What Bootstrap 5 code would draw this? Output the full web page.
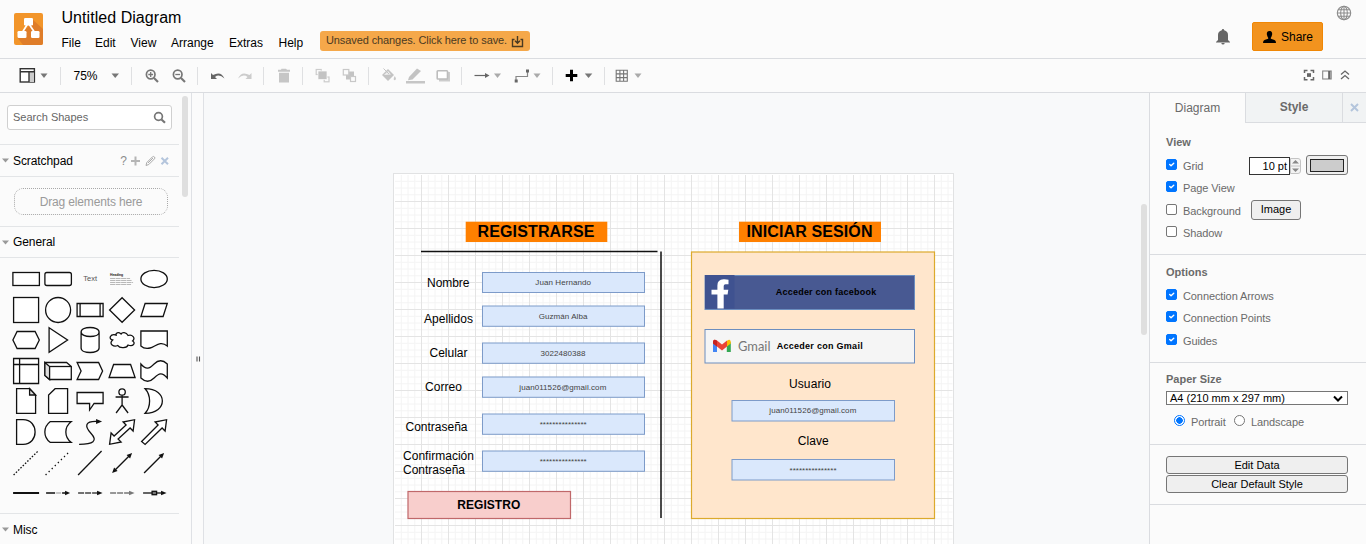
<!DOCTYPE html>
<html lang="es">
<head>
<meta charset="utf-8">
<meta name="viewport" content="width=device-width, initial-scale=1">
<title>Untitled Diagram</title>
<link href="https://cdn.jsdelivr.net/npm/bootstrap@5.3.0/dist/css/bootstrap.min.css" rel="stylesheet">
<script src="https://cdn.jsdelivr.net/npm/bootstrap@5.3.0/dist/js/bootstrap.bundle.min.js"></script>
<style>
body{font-family:"Liberation Sans",Arial,sans-serif;font-size:12px;line-height:1.2;color:#000;background:#fbfbfb;height:544px;overflow:hidden}
svg{display:block;flex:none}
.topbar{height:59px;border-bottom:1px solid #dadce0}
.logo-box{margin:13px 0 0 14px}
.doc-title{font-size:16px;line-height:18px;margin-top:9px;letter-spacing:.05px}
.menu-row{height:22px;margin-top:5px}
.menu-row a{color:#000;text-decoration:none}
.menu-row a.mi{display:block;line-height:22px}
.save-pill{width:210px;height:20px;background:#f5a84a;border-radius:3px;font-size:11px;padding-left:6px;letter-spacing:-.1px;white-space:nowrap}
.menu-row a.save-pill{color:#4b3a22}
.share-btn{width:71px;height:29px;background:#f2931e;border:1px solid #f08705;border-radius:2px;margin:22px 6px 0 0;font-size:12px;padding:0 0 0 9px;color:#000}
.share-btn span{padding-top:1px}
.toolstrip{height:34px;border-bottom:1px solid #dadce0}
.tsep{width:1px;height:18px;background:#dfe0e2;flex:none}
.workspace{height:451px}
.side-l{width:192px;border-right:1px solid #dfe1e5;position:relative}
.side-in{width:179px}
.scroll-thumb{position:absolute;background:#dfdfdf;border-radius:3px}
.search-box{margin:12px 0 0 7px;width:165px;height:25px;border:1px solid #d0d0d0;border-radius:3px;background:#fff;color:#666;padding:0 5px;font-size:11px}
.search-box span{padding-top:1px}
.sec-head{height:33px;border-top:1px solid #e3e5e7;padding-left:2px}
.sec-head span{margin-left:3px;padding-top:1px;letter-spacing:-.08px}
.drop-box{margin:11px 0 11px 14px;width:154px;height:27px;border:1px dotted #a8a8a8;border-radius:9px;color:#9a9a9a;letter-spacing:-.15px;padding-top:1px}
.shape-grid{display:grid;grid-template-columns:repeat(5,32.2px);grid-auto-rows:30.6px;padding:6px 0 0 9.6px;height:256px;border-top:1px solid #e3e5e7}
.shape-grid svg{width:32.2px;height:30.6px;fill:#fff;stroke:#111;stroke-width:1.3}
.splitter{width:12px;border-right:1px solid #dfe1e5}
.side-r{width:217px;border-left:1px solid #dadce0;color:#6a6a6a;font-size:11px}
.tab-r{height:30px;font-size:12px}
.tab-off{background:#f1f3f4;border-left:1px solid #dadce0;border-bottom:1px solid #dadce0}
.sect{border-bottom:1px solid #dadce0;padding-left:16px}
.sect h6{font-size:11px;font-weight:700;line-height:18px;margin:0 0 3.75px;color:#6a6a6a}
.opt{height:22.4px;letter-spacing:-.1px}
.opt>span{padding-top:1.600px}
.opt .form-check-input{width:11px;height:11px;margin:-3px 6px 0 0;border:1px solid #767676;border-radius:2px;flex:none}
.opt .form-check-input[type=radio]{border-radius:50%}
.opt .form-check-input:checked{background-color:#0075ff;border-color:#0075ff}
.opt .form-check-input[type=radio]:checked{background-color:#fff;border-color:#0075ff;background-image:radial-gradient(circle,#0075ff 0 3px,transparent 3.5px)}
.num{width:41px;height:18px;border:1px solid #333;background:#fff;color:#000;text-align:right;padding-right:2px;line-height:17px;letter-spacing:0}
.gbtn{background:#efefef;border:1px solid #767676;border-radius:3px;color:#000;font-size:11px;line-height:1;display:flex;align-items:center;justify-content:center;padding:0}
.size-sel{width:182px;height:14px;border:1px solid #767676;background:#fff;color:#000;padding:0 4px 0 3px}
.size-sel span{padding-top:1px}
</style>
</head>
<body>
<header class="topbar d-flex">
  <div class="logo-box">
    <svg width="29" height="32" viewBox="0 0 29 32"><rect width="29" height="32" rx="2" fill="#f2952a"/><path d="M18 6L29 16V30Q29 32 27 32H9L3 24L14 14Z" fill="#df7d29"/><path d="M13.500 11L8 20M15 11L21 20" stroke="#fff" stroke-width="1.700"/><g fill="#fff"><rect x="10" y="5" width="9" height="7.500" rx="1.300"/><rect x="3.500" y="18" width="9" height="7" rx="1.300"/><rect x="17" y="18" width="8.500" height="7" rx="1.300"/></g></svg>
  </div>
  <div class="d-flex flex-column" style="margin-left:18.5px">
    <div class="doc-title">Untitled Diagram</div>
    <nav class="menu-row d-flex">
      <a class="mi" href="#" style="width:33.5px">File</a><a class="mi" href="#" style="width:35.5px">Edit</a><a class="mi" href="#" style="width:40.5px">View</a><a class="mi" href="#" style="width:58px">Arrange</a><a class="mi" href="#" style="width:49.5px">Extras</a><a class="mi" href="#" style="width:41.5px">Help</a>
      <a href="#" class="save-pill d-flex align-items-center" style="margin-top:-1px">Unsaved changes. Click here to save.<svg class="ms-1" width="13" height="13" viewBox="0 0 13 13" fill="none" stroke="#4b3a22" stroke-width="1.400"><path d="M3.500 4.500H1.500V11.500H11.500V4.500H9.500M6.500 1V8M4 5.800L6.500 8.300L9 5.800"/></svg></a>
    </nav>
  </div>
  <div class="d-flex ms-auto">
    <svg style="margin:28px 21px 0 0" width="16" height="17" viewBox="0 0 16 17"><path d="M8 1Q9.200 1 9.200 2.300Q13 3.300 13 7V12L15 14V14.500H1V14L3 12V7Q3 3.300 6.800 2.300Q6.800 1 8 1ZM6.300 15H9.700Q9.500 16.500 8 16.500Q6.500 16.500 6.300 15Z" fill="#666"/></svg>
    <button class="share-btn d-flex align-items-center"><svg width="15" height="14" viewBox="0 0 15 14"><path d="M7.500 1C10 1 10.500 3 10 5Q9.500 7 8.800 7.700V8.800L12.500 10Q14 10.500 14 13H1Q1 10.500 2.500 10L6.200 8.800V7.700Q5.500 7 5 5C4.500 3 5 1 7.500 1Z"/></svg><span class="ms-1">Share</span></button>
    <svg style="margin:5px 14px 0 7px" width="16" height="16" viewBox="0 0 16 16" fill="none" stroke="#8c8c8c" stroke-width="1.100"><circle cx="8" cy="8" r="6.700"/><ellipse cx="8" cy="8" rx="3.300" ry="6.700"/><path d="M8 1V15M1.300 8H14.700M2.300 4.700H13.700M2.300 11.300H13.700"/></svg>
  </div>
</header>

<div class="toolstrip d-flex align-items-center">
  <svg width="60" height="33" viewBox="0 59 60 33"><g fill="none" stroke="#333" stroke-width="1.400"><rect x="20.200" y="68.700" width="14.200" height="13.300" fill="#fff"/><rect x="29" y="72" width="5" height="10" fill="#ccc" stroke="none"/><path d="M20 71.700H34.500M29 72V82"/></g><path d="M40.500 73.500H47.500L44 78Z" fill="#777"/></svg>
  <div class="tsep"></div>
  <span style="width:50px;padding:1px 0 0 12.5px">75%</span>
  <svg width="20" height="33" viewBox="111 59 20 33"><path d="M111.500 73.500H119L115.200 78Z" fill="#777"/></svg>
  <div class="tsep"></div>
  <svg width="33" height="33" viewBox="132 59 33 33" fill="none" stroke="#777" stroke-width="1.700"><circle cx="150.700" cy="74.500" r="4.300"/><path d="M154 78L158 82" stroke-width="2.200"/><path d="M148.300 74.500H153.100M150.700 72.100V76.900" stroke-width="1.300"/></svg>
  <svg width="32" height="33" viewBox="165 59 32 33" fill="none" stroke="#777" stroke-width="1.700"><circle cx="177.700" cy="74.500" r="4.300"/><path d="M181 78L185 82" stroke-width="2.200"/><path d="M175.300 74.500H180.100" stroke-width="1.300"/></svg>
  <div class="tsep"></div>
  <svg width="33" height="33" viewBox="198 59 33 33"><path d="M211 73V79H217L215 77Q219 73.500 224.500 78.500Q221 70.500 213 75Z" fill="#666"/></svg>
  <svg width="32" height="33" viewBox="231 59 32 33"><path d="M251.500 73V79H245.500L247.500 77Q243.500 73.500 238 78.500Q241.500 70.500 249.500 75Z" fill="#ccc"/></svg>
  <div class="tsep"></div>
  <svg width="38" height="33" viewBox="264 59 38 33"><path d="M281.500 68.700H286L287 69.700H290V71.700H278V69.700H281ZM279 72.700H289V82.500H279Z" fill="#c6c6c6"/></svg>
  <div class="tsep"></div>
  <svg width="32" height="33" viewBox="303 59 32 33"><g fill="none" stroke="#ccc" stroke-width="1.200"><rect x="316.200" y="69.500" width="5" height="5"/><rect x="324.200" y="77" width="4.800" height="4.800"/></g><rect x="318" y="71" width="9" height="8.500" fill="#c3c3c3" stroke="#fbfbfb" stroke-width=".7"/></svg>
  <svg width="33" height="33" viewBox="335 59 33 33"><rect x="346" y="71.500" width="8" height="8" fill="#c3c3c3"/><g fill="#fbfbfb" stroke="#c8c8c8" stroke-width="1.200"><rect x="343.300" y="69.500" width="5.500" height="5.500"/><rect x="350.500" y="76.500" width="5" height="5"/></g></svg>
  <div class="tsep"></div>
  <svg width="33" height="33" viewBox="369 59 33 33"><path d="M382 75L388 69L394 75L388 81Z" fill="#c3c3c3"/><path d="M384 75L388 71L391 74.500Z" fill="#eee"/><path d="M383.500 68.500L389 74" stroke="#c3c3c3" fill="none"/><path d="M394.700 76Q397 79 395 80.300Q392.500 80.300 394.700 76Z" fill="#c8c8c8"/></svg>
  <svg width="28" height="33" viewBox="402 59 28 33"><path d="M409 77L417 68.500L421 71L412.500 79.500L408 80.300Z" fill="#c3c3c3"/><rect x="406" y="81" width="19" height="2.500" fill="#c6c6c6"/></svg>
  <svg width="31" height="33" viewBox="430 59 31 33"><path d="M439 72H450V81.500H439Z" fill="#ccc"/><rect x="437.200" y="70.700" width="10.300" height="8.300" rx=".7" fill="#fff" stroke="#bdbdbd" stroke-width="1.600"/></svg>
  <div class="tsep"></div>
  <svg width="46" height="33" viewBox="462 59 46 33"><path d="M474.500 75.500H486" stroke="#666" stroke-width="1.200"/><path d="M485 73L489.500 75.500L485 78Z" fill="#666"/><path d="M494 73.500H501L497.500 78Z" fill="#aaa"/></svg>
  <svg width="44" height="33" viewBox="508 59 44 33"><path d="M516 81V76.500H527.500V70.500" fill="none" stroke="#888" stroke-width="1.200"/><path d="M514.700 79.500H517.700V82.500H514.700ZM526 69.500H529V72.500H526Z" fill="#666"/><path d="M533.500 73.500H540.500L537 78Z" fill="#aaa"/></svg>
  <div class="tsep"></div>
  <svg width="51" height="33" viewBox="553 59 51 33"><path d="M565.700 75.500H577.300M571.500 69.800V81.200" stroke="#000" stroke-width="3"/><path d="M584.800 73.500H592.300L588.500 78Z" fill="#777"/></svg>
  <div class="tsep"></div>
  <svg width="60" height="33" viewBox="605 59 60 33"><path d="M616.200 70.200H627.300V81.300H616.200ZM619.900 70V81.500M623.600 70V81.500M616 73.900H627.500M616 77.600H627.500" fill="none" stroke="#777" stroke-width="1.100"/><path d="M634.500 73.500H641.500L638 78Z" fill="#aaa"/></svg>
  <svg class="ms-auto" width="66" height="33" viewBox="1300 59 66 33" fill="none" stroke="#666" stroke-width="1.500"><path d="M1304.500 73V70.500H1307.500M1310.500 70.500H1313.500V73M1313.500 77V79.700H1310.500M1307.500 79.700H1304.500V77"/><rect x="1307" y="73.200" width="4" height="3.700" fill="#666" stroke="none"/><rect x="1322.700" y="71" width="8.500" height="8" stroke="#888" stroke-width="1.100"/><path d="M1329.300 71V79" stroke-width="2.300"/><path d="M1341 74.500L1345 71L1349 74.500M1341 79L1345 75.500L1349 79" stroke-width="1.300"/></svg>
</div>

<main class="workspace d-flex">
  <aside class="side-l flex-shrink-0">
    <div class="side-in">
      <div class="search-box d-flex align-items-center justify-content-between"><span>Search Shapes</span><svg width="13" height="13" viewBox="0 0 13 13" fill="none" stroke="#777" stroke-width="1.700"><circle cx="5.500" cy="5.500" r="3.900"/><path d="M8.500 8.500L12 11.700" stroke-width="2.200"/></svg></div>
      <div class="sec-head d-flex align-items-center" style="margin-top:14px;height:32px"><svg width="8" height="5" viewBox="0 0 8 5"><path d="M0 .5H7L3.500 4.500Z" fill="#999"/></svg><span>Scratchpad</span>
        <svg class="ms-auto me-1" width="56" height="16" viewBox="0 0 56 16"><text x="1.300" y="12" font-size="12" fill="#8d8d8d" font-family="Liberation Sans">?</text><path d="M12 8H21M16.500 3.500V12.500" stroke="#b5b5b5" stroke-width="2"/><path d="M27 12.500L27.800 9.500L33.500 3.800Q34.500 3 35.500 4Q36.300 5 35.500 5.800L29.800 11.500ZM29 10L34 5" fill="none" stroke="#aaa"/><path d="M42.500 4.700L49 11.300M49 4.700L42.500 11.300" stroke="#b4c5dc" stroke-width="2"/></svg></div>
      <div style="border-top:1px solid #e3e5e7;height:1px"></div>
      <div class="drop-box d-flex align-items-center justify-content-center">Drag elements here</div>
      <div class="sec-head d-flex align-items-center" style="height:31px"><svg width="8" height="5" viewBox="0 0 8 5"><path d="M0 .5H7L3.500 4.500Z" fill="#999"/></svg><span style="padding-top:0">General</span></div>
      <div class="shape-grid">
        <svg viewBox="-16 -15 32 30.600"><rect x="-13.200" y="-6.500" width="26.500" height="13"/></svg>
        <svg viewBox="-16 -15 32 30.600"><rect x="-13.200" y="-6.500" width="26.500" height="13" rx="2"/></svg>
        <svg viewBox="-16 -15 32 30.600"><text x="0" y="2.500" text-anchor="middle" font-size="7.500" stroke="none" fill="#555">Text</text></svg>
        <svg viewBox="-16 -15 32 30.600"><text x="-12" y="-3" font-size="3.500" font-weight="bold" stroke="none" fill="#222" textLength="13">Heading</text><path d="M-12 -.5H8M-12 1.500H10M-12 3.500H11M-12 5.500H9" stroke="#999" stroke-width=".7" stroke-dasharray="5 .5"/></svg>
        <svg viewBox="-16 -15 32 30.600"><ellipse rx="13.200" ry="8.600"/></svg>

        <svg viewBox="-16 -15 32 30.600"><rect x="-12.500" y="-12.500" width="25" height="25"/></svg>
        <svg viewBox="-16 -15 32 30.600"><circle r="12.500"/></svg>
        <svg viewBox="-16 -15 32 30.600"><path d="M-13 -6.500H13V6.500H-13ZM-10 -6.500V6.500M10 -6.500V6.500"/></svg>
        <svg viewBox="-16 -15 32 30.600"><path d="M0 -12.300L12.500 0L0 12.300L-12.500 0Z"/></svg>
        <svg viewBox="-16 -15 32 30.600"><path d="M-9 -6.500H13.200L9 6.500H-13.200Z"/></svg>

        <svg viewBox="-16 -15 32 30.600"><path d="M-9 -8.500H9L13.200 0L9 8.500H-9L-13.200 0Z"/></svg>
        <svg viewBox="-16 -15 32 30.600"><path d="M-9 -12.300L9.500 0L-9 12.300Z"/></svg>
        <svg viewBox="-16 -15 32 30.600"><path d="M-9 -8V8C-9 14 9 14 9 8V-8M-9 -8C-9 -14 9 -14 9 -8C9 -2 -9 -2 -9 -8"/></svg>
        <svg viewBox="-16 -15 32 30.600"><path d="M-6 -5C-12 -6.500 -14 -1 -9.500 0C-14 4 -8 7.500 -4.500 5.500C-2 9 5 8 6 5C11 7 14 3 10.500 1C14 -2 10 -6 6 -4.500C4 -8 0 -8 -1 -6C-4 -8.500 -6.500 -7 -6 -5Z"/></svg>
        <svg viewBox="-16 -15 32 30.600"><path d="M-13.200 -9H13.200V6C6 0 1 7 -4 8C-8 9 -11 8 -13.200 6Z"/></svg>

        <svg viewBox="-16 -15 32 30.600"><path d="M-12.500 -12.500H12.500V12.500H-12.500ZM-12.500 -6.500H12.500M-6.500 -12.500V12.500"/></svg>
        <svg viewBox="-16 -15 32 30.600"><path d="M-13.200 -8.500H8.500L13.200 -4.500V8.500H-8.500L-13.200 4.500Z"/><path d="M-13.200 -8.500L-8.500 -4.500V8.500L-13.200 4.500Z" fill="#ddd"/><path d="M-8.500 -4.500H13.200"/></svg>
        <svg viewBox="-16 -15 32 30.600"><path d="M-13 -8.500H8.500L12.500 0L8.500 8.500H-13L-9 0Z"/></svg>
        <svg viewBox="-16 -15 32 30.600"><path d="M-8.500 -6.500H8.500L13 6.500H-13Z"/></svg>
        <svg viewBox="-16 -15 32 30.600"><path d="M-13.200 -7C-8 -1 -5 -2 0 -7C5 -12 9 -11 13.200 -7V7C8 1 5 2 0 7C-5 12 -9 11 -13.200 7Z"/></svg>

        <svg viewBox="-16 -15 32 30.600"><path d="M-9.500 -12.300H3.500L9.500 -6V12.300H-9.500Z"/><path d="M3.500 -12.300V-6H9.500Z" fill="#ddd"/></svg>
        <svg viewBox="-16 -15 32 30.600"><path d="M-3 -12.300H9.500V12.300H-9.500V-6Z"/></svg>
        <svg viewBox="-16 -15 32 30.600"><path d="M-13 -8.500H13V2.500H4L-.5 9V2.500H-13Z"/></svg>
        <svg viewBox="-16 -15 32 30.600"><circle cy="-9" r="3.200"/><path d="M0 -5.800V4L-6 12M0 4L6 12M-6.500 -4H6.500" fill="none"/></svg>
        <svg viewBox="-16 -15 32 30.600"><path d="M-9 -12.300C14 -12.300 14 12.300 -9 12.300C-3 6 -3 -6 -9 -12.300Z"/></svg>

        <svg viewBox="-16 -15 32 30.600"><path d="M-9.500 -12.300H-3C13 -12.300 13 12.300 -3 12.300H-9.500Z"/></svg>
        <svg viewBox="-16 -15 32 30.600"><path d="M-8 -10.300H13C6 -5 6 5 13 10.300H-8C-15 5 -15 -5 -8 -10.300Z"/></svg>
        <svg viewBox="-16 -15 32 30.600"><path d="M-11 12.300C3 12.300 8 9 1 1.500C-6 -6 -5 -11 7 -10.500" fill="none"/><path d="M6 -13L12 -10.500L6 -8Z" fill="#111" stroke="none"/></svg>
        <svg viewBox="-16 -15 32 30.600"><path d="M12.500 -12.300L11 -1L8 -4L-4 7L-1 10L-12.500 12.300L-11 1L-8 4L4 -7L1 -10Z"/></svg>
        <svg viewBox="-16 -15 32 30.600"><path d="M12.500 -12.300L11 -1L8 -4L-9 12.500L-12.500 9.500L4 -7L1 -10Z"/></svg>

        <svg viewBox="-16 -15 32 30.600"><path d="M-12.500 12L12 -12" stroke-dasharray="1.600 1.600"/></svg>
        <svg viewBox="-16 -15 32 30.600"><path d="M-12.500 12L11 -11" stroke-dasharray="1.300 3"/></svg>
        <svg viewBox="-16 -15 32 30.600"><path d="M-12 12L11.500 -12"/></svg>
        <svg viewBox="-16 -15 32 30.600"><path d="M-8 8L8 -8"/><path d="M-10 10L-8 4.500L-4.500 8ZM10 -10L8 -4.500L4.500 -8Z" fill="#111" stroke="none"/></svg>
        <svg viewBox="-16 -15 32 30.600"><path d="M-10 10L8 -8"/><path d="M10 -10L8 -4.500L4.500 -8Z" fill="#111" stroke="none"/></svg>

        <svg viewBox="-16 -15 32 30.600"><path d="M-13 0H13" stroke-width="2"/></svg>
        <svg viewBox="-16 -15 32 30.600"><path d="M-12 0H-3M4 0H8"/><path d="M-2 0H3" stroke="#aaa"/><path d="M7 -2.200L12 0L7 2.200Z" fill="#111" stroke="none"/></svg>
        <svg viewBox="-16 -15 32 30.600"><path d="M-12 0H9" stroke="#444" stroke-dasharray="6 1"/><path d="M7 -2.200L12.500 0L7 2.200Z" fill="#111" stroke="none"/></svg>
        <svg viewBox="-16 -15 32 30.600"><path d="M-12 0H9" stroke="#777" stroke-dasharray="6 1"/><path d="M7 -2.200L12.500 0L7 2.200Z" fill="#777" stroke="none"/></svg>
        <svg viewBox="-16 -15 32 30.600"><path d="M-11 0H9"/><rect x="-2" y="-1.700" width="4.500" height="3.400" fill="#777"/><path d="M7 -2.200L12.500 0L7 2.200Z" fill="#111" stroke="none"/></svg>
      </div>
      <div class="sec-head d-flex align-items-center" style="height:32px"><svg width="8" height="5" viewBox="0 0 8 5"><path d="M0 .5H7L3.500 4.500Z" fill="#999"/></svg><span>Misc</span></div>
    </div>
    <div class="scroll-thumb" style="left:182px;top:3px;width:6px;height:101px"></div>
  </aside>
  <div class="splitter flex-shrink-0"><svg width="11" height="451" viewBox="192 93 11 451"><path d="M197 356.500V361.500M199.500 356.500V361.500" stroke="#555" stroke-width="1.100"/></svg></div>

  <svg width="945" height="451" viewBox="204 93 945 451" font-family="Liberation Sans, Arial, sans-serif">
    <defs>
      <pattern id="grid" x="421" y="201" width="27" height="27" patternUnits="userSpaceOnUse">
        <path d="M7.250 0V27M14 0V27M20.750 0V27M0 7.250H27M0 14H27M0 20.750H27" stroke="#f4f4f4"/>
        <path d="M.5 0V27M0 .5H27" stroke="#e4e4e4"/>
      </pattern>
    </defs>
    <rect x="204" y="93" width="945" height="451" fill="#f8f9fa"/>
    <rect x="393.500" y="173.500" width="560" height="380" fill="#fff" stroke="#e1e2e3"/>
    <rect x="395" y="175" width="557.500" height="369" fill="url(#grid)"/>

    <rect x="465.700" y="221.700" width="141.600" height="20.300" fill="#ff8000"/>
    <text x="477.500" y="237" font-size="16" font-weight="bold" textLength="117">REGISTRARSE</text>
    <path d="M421 251.500H657.500M661 251.500V518" stroke="#111" stroke-width="1.500"/>
    <g font-size="12">
      <text x="427" y="287" textLength="42.500">Nombre</text>
      <text x="424" y="323" textLength="49">Apellidos</text>
      <text x="429.500" y="357" textLength="38">Celular</text>
      <text x="425" y="391" textLength="37">Correo</text>
      <text x="405.500" y="431" textLength="62">Contraseña</text>
      <text x="403" y="460" textLength="71">Confirmación</text>
      <text x="403" y="474" textLength="62">Contraseña</text>
    </g>
    <g fill="#dae8fc" stroke="#7d9bc9">
      <rect x="482.500" y="272.500" width="162" height="20"/>
      <rect x="482.500" y="306" width="162" height="20.300"/>
      <rect x="482.500" y="343" width="162" height="20.300"/>
      <rect x="482.500" y="377" width="162" height="20.300"/>
      <rect x="482.500" y="414" width="162" height="20.300"/>
      <rect x="482.500" y="451" width="162" height="20.300"/>
    </g>
    <g font-size="8" fill="#444">
      <text x="535.300" y="285" textLength="55.700">Juan Hernando</text>
      <text x="538.700" y="319" textLength="48.700">Guzmán Alba</text>
      <text x="540.500" y="356" textLength="45">3022480388</text>
      <text x="519.300" y="390" textLength="87">juan011526@gmail.com</text>
      <text x="539.700" y="426.500" textLength="47">***************</text>
      <text x="539.700" y="463.500" textLength="47">***************</text>
    </g>
    <rect x="408" y="491.500" width="162.500" height="27" fill="#f8cecc" stroke="#c0686a" stroke-width="1.200"/>
    <text x="457.300" y="509" font-size="12" font-weight="bold" textLength="63">REGISTRO</text>

    <rect x="739" y="221.700" width="142" height="20.300" fill="#ff8000"/>
    <text x="746.500" y="237" font-size="16" font-weight="bold" textLength="126">INICIAR SESIÓN</text>
    <rect x="691.500" y="252" width="243" height="266.500" fill="#ffe6cc" stroke="#dcaa2c" stroke-width="1.200"/>
    <rect x="705" y="275.500" width="209.500" height="34" fill="#485992" stroke="#6c8ebf"/>
    <rect x="705" y="275" width="29.500" height="33.500" fill="#3f5290"/>
    <path d="M728.500 279.700V284.200H725.500Q723.700 284.200 723.700 286V289.800H728.300L727.600 294.500H723.700V308.500H717.400V294.500H711.500V289.800H717.400V285.500Q717.400 279.500 723.500 279.300Q726.500 279.200 728.500 279.700Z" fill="#fff"/>
    <text x="775.700" y="295" font-size="9" font-weight="bold" textLength="100.500">Acceder con facebook</text>
    <rect x="705" y="329.500" width="209.500" height="33.500" fill="#f5f5f5" stroke="#6c8ebf"/>
    <path d="M713 342V352H717V344.500Z" fill="#4285f4"/><path d="M726.800 344.500V352H730.800V342Z" fill="#34a853"/><path d="M713 343.500Q712.700 338 717 340.500L722 344.500L727 340.500V346.500L722 350.500L717 346.500Z" fill="#ea4335"/><path d="M713 343.500Q712.700 338 717 340.800V346.500Z" fill="#c5221f"/><path d="M727 340.800Q731 338 730.800 343.500L727 346.500Z" fill="#fbbc04"/>
    <text x="738" y="351" font-size="13.500" fill="#777" font-family="Lato, Liberation Sans, sans-serif" textLength="32.500" lengthAdjust="spacingAndGlyphs">Gmail</text>
    <text x="776.700" y="349" font-size="9" font-weight="bold" textLength="86">Acceder con Gmail</text>
    <text x="789" y="388" font-size="12" textLength="42">Usuario</text>
    <rect x="732" y="400.500" width="162.500" height="20.500" fill="#dae8fc" stroke="#7d9bc9"/>
    <text x="769.300" y="413" font-size="8" fill="#444" textLength="87">juan011526@gmail.com</text>
    <text x="797.700" y="445" font-size="12" textLength="31">Clave</text>
    <rect x="732" y="459.500" width="162.500" height="20.500" fill="#dae8fc" stroke="#7d9bc9"/>
    <text x="789.500" y="472.500" font-size="8" fill="#444" textLength="47">***************</text>
    <rect x="1141" y="204" width="6" height="131" rx="3" fill="#dfdfdf"/>
  </svg>

  <aside class="side-r flex-shrink-0">
    <div class="d-flex text-center">
      <div class="tab-r d-flex align-items-center justify-content-center" style="width:95px">Diagram</div>
      <div class="tab-r tab-off fw-bold d-flex align-items-center justify-content-center" style="width:97px">Style</div>
      <div class="tab-r tab-off d-flex align-items-center justify-content-center flex-grow-1"><svg width="9" height="9" viewBox="0 0 9 9"><path d="M1 1L8 8M8 1L1 8" stroke="#b4c5dc" stroke-width="2"/></svg></div>
    </div>
    <section class="sect" style="height:132px;padding-top:10px">
      <h6>View</h6>
      <div class="opt d-flex align-items-center"><input class="form-check-input" type="checkbox" checked><span style="width:66px">Grid</span><div class="num">10 pt</div>
        <svg width="11" height="18" viewBox="0 0 11 18"><path d="M.5 1.500H8Q10.500 1.500 10.500 4V14Q10.500 16.500 8 16.500H.5ZM0 9H10.500" fill="#f3f3f3" stroke="#c4c4c4"/><path d="M2 6.500L5.500 3L9 6.500ZM2 11.500L5.500 15L9 11.500Z" fill="#888"/></svg>
        <div class="gbtn" style="width:42px;height:20px;margin:-1px 0 0 5px"><span style="width:34px;height:13px;background:#ccc;border:1px solid #222"></span></div></div>
      <div class="opt d-flex align-items-center"><input class="form-check-input" type="checkbox" checked><span style="padding-top:.5px">Page View</span></div>
      <div class="opt d-flex align-items-center"><input class="form-check-input" type="checkbox"><span style="width:68px">Background</span><button class="gbtn" style="width:50px;height:20px;margin-top:-2px;letter-spacing:0">Image</button></div>
      <div class="opt d-flex align-items-center"><input class="form-check-input" type="checkbox"><span style="padding-top:.5px">Shadow</span></div>
    </section>
    <section class="sect" style="height:108px;padding-top:8px">
      <h6>Options</h6>
      <div class="opt d-flex align-items-center"><input class="form-check-input" type="checkbox" checked><span>Connection Arrows</span></div>
      <div class="opt d-flex align-items-center"><input class="form-check-input" type="checkbox" checked><span style="padding-top:.5px">Connection Points</span></div>
      <div class="opt d-flex align-items-center"><input class="form-check-input" type="checkbox" checked><span>Guides</span></div>
    </section>
    <section class="sect" style="height:82px;padding-top:7px">
      <h6 style="margin-bottom:3px">Paper Size</h6>
      <div class="size-sel d-flex align-items-center justify-content-between"><span>A4 (210 mm x 297 mm)</span><svg width="10" height="7" viewBox="0 0 10 7"><path d="M1 1.500L5 5.500L9 1.500" fill="none" stroke="#000" stroke-width="2"/></svg></div>
      <div class="opt d-flex align-items-center" style="margin:6px 0 0 8px"><input class="form-check-input" type="radio" name="orient" checked><span style="width:43px;padding-top:.5px">Portrait</span><input class="form-check-input" type="radio" name="orient"><span style="padding-top:.5px">Landscape</span></div>
    </section>
    <section class="sect" style="height:60px;padding-top:11px">
      <button class="gbtn" style="width:182px;height:18px">Edit Data</button>
      <button class="gbtn" style="width:182px;height:18px;margin-top:1px">Clear Default Style</button>
    </section>
  </aside>
</main>
</body>
</html>
